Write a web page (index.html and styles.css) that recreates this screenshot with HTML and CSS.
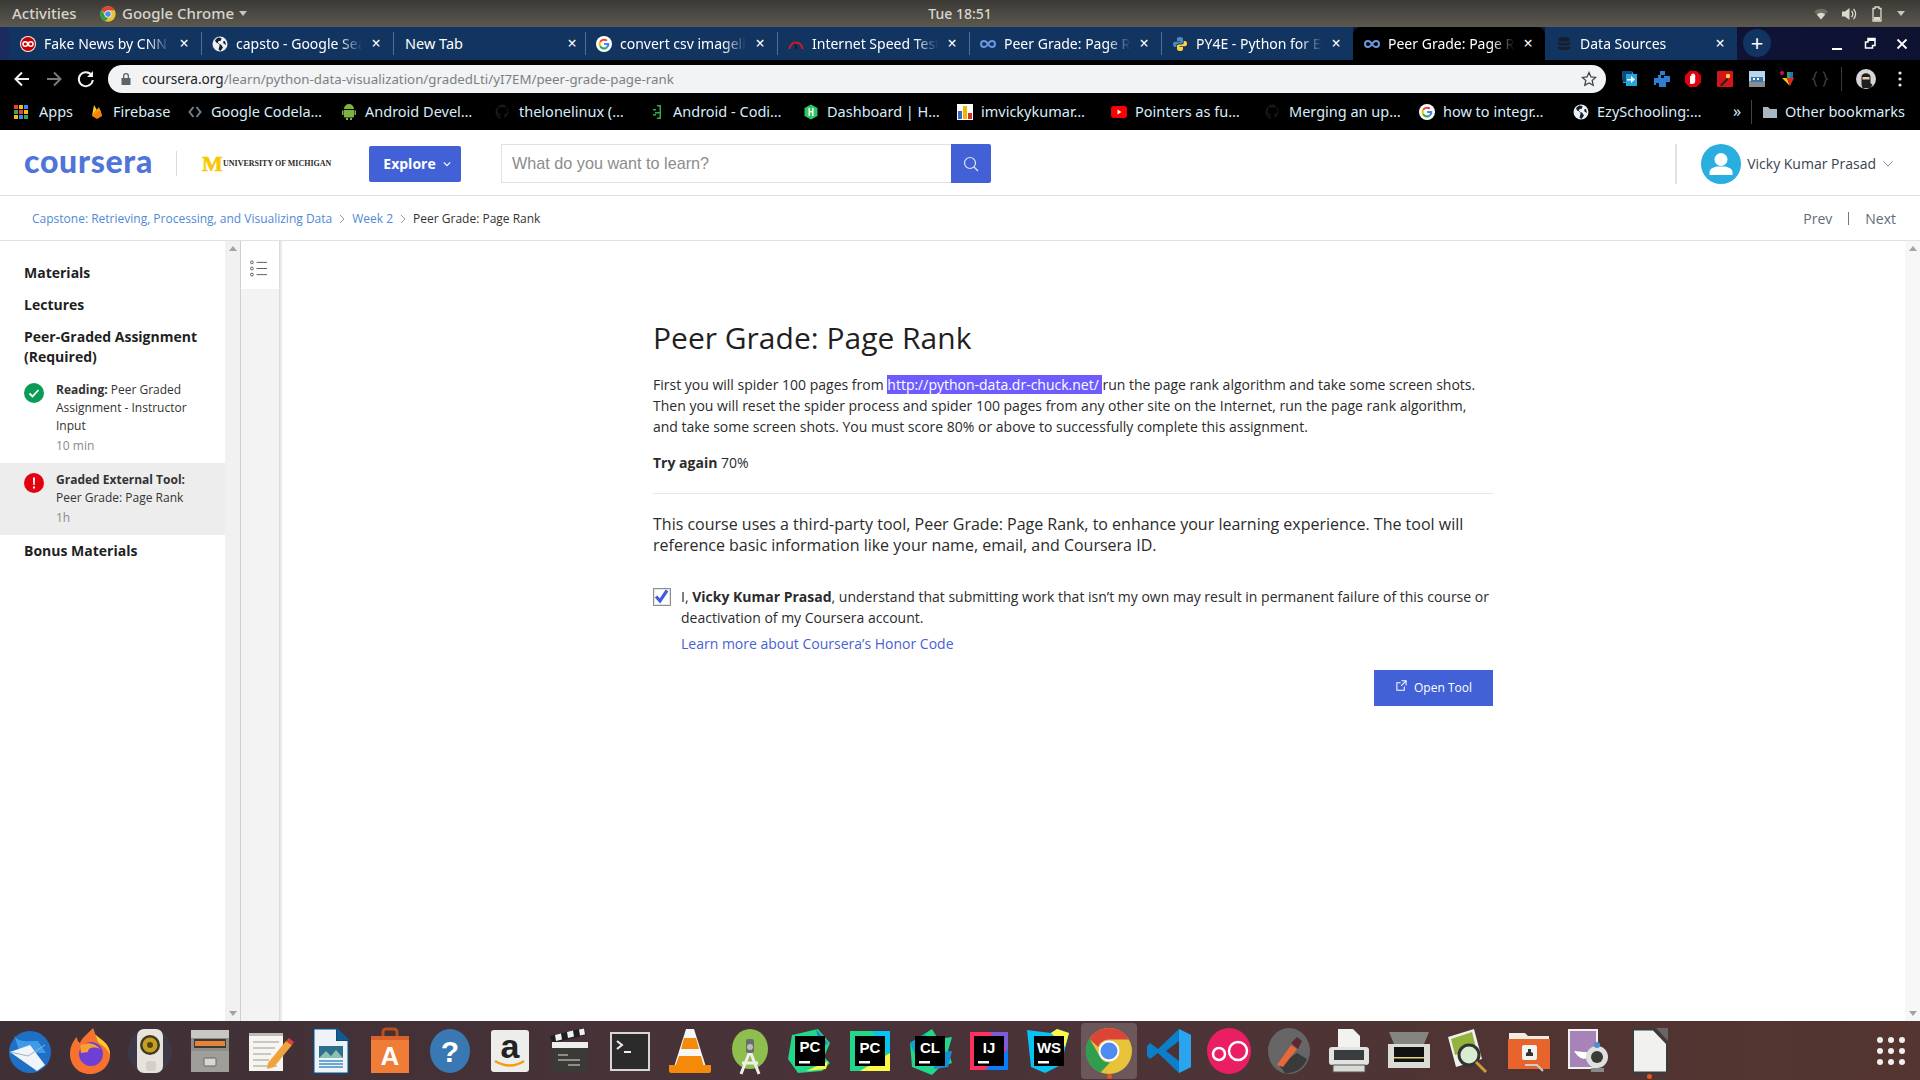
FILE: index.html
```html
<!DOCTYPE html>
<html lang="en">
<head>
<meta charset="utf-8">
<title>Peer Grade: Page Rank</title>
<link rel="stylesheet" href="styles.css">
</head>
<body>
<svg class="defs" xmlns="http://www.w3.org/2000/svg">
  <symbol id="chrome" viewBox="0 0 48 48">
    <circle cx="24" cy="24" r="23" fill="#e7c33a"/>
    <path d="M24 1a23 23 0 0 1 20 11.500H24a11.500 11.500 0 0 0-10.800 7.500L4.500 12A23 23 0 0 1 24 1z" fill="#db4437"/>
    <path d="M4.500 11.500 14 28a11.500 11.500 0 0 0 11 7.500L15.500 45.500A23 23 0 0 1 4.500 11.500z" fill="#2f9e4f"/>
    <circle cx="24" cy="24" r="10.500" fill="#fff"/><circle cx="24" cy="24" r="8.500" fill="#4f8bf0"/>
  </symbol>
  <symbol id="goog" viewBox="0 0 16 16">
    <circle cx="8" cy="8" r="8" fill="#fff"/>
    <path d="M8 2.700a5.300 5.300 0 0 1 3.600 1.400L10.200 5.500A3.300 3.300 0 0 0 5 6.500L3.300 5.200A5.300 5.300 0 0 1 8 2.700z" fill="#ea4335"/>
    <path d="M3.300 5.200 5 6.500a3.300 3.300 0 0 0 0 3L3.300 10.800a5.300 5.300 0 0 1 0-5.600z" fill="#fbbc05"/>
    <path d="M5 9.500a3.300 3.300 0 0 0 5 1.200l1.600 1.300A5.300 5.300 0 0 1 3.300 10.800z" fill="#34a853"/>
    <path d="M13.300 7H8v2.100h3a2.700 2.700 0 0 1-1 1.600l1.600 1.300A5.300 5.300 0 0 0 13.300 7z" fill="#4285f4"/>
  </symbol>
  <symbol id="globe" viewBox="0 0 16 16">
    <circle cx="8" cy="8" r="7.500" fill="#eef1f4"/>
    <path d="M6 1.500 3 4l1 2.500 3 1 .5 2.500-1 3.500L8.500 15 11 11.500l-2-3-3-.5V5.500l3-1 .5-2.500zM13 5l-2 .5.500 2 2.500 1.500z" fill="#16202c"/>
  </symbol>
  <symbol id="loop" viewBox="0 0 16 16">
    <path d="M8 8C6.500 5.500 5.500 5 4 5a3 3 0 0 0 0 6c1.500 0 2.500-.5 4-3s2.500-3 4-3a3 3 0 0 1 0 6c-1.500 0-2.500-.5-4-3z" fill="none" stroke="#6a96dc" stroke-width="2"/>
  </symbol>
  <symbol id="gh" viewBox="0 0 16 16">
    <path d="M8 .500a7.500 7.500 0 0 0-2.400 14.600v-2.500c-2 .4-2.500-1-2.500-1-.4-.8-.8-1-.8-1-.7-.5 0-.5 0-.5.700 0 1.100.8 1.100.8.600 1.100 1.700.8 2.100.6 0-.5.300-.8.500-1-1.700-.2-3.400-.8-3.400-3.700 0-.8.300-1.500.8-2-.1-.2-.3-1 .1-2 0 0 .6-.2 2.100.8a7 7 0 0 1 3.800 0c1.500-1 2.100-.8 2.100-.8.400 1 .2 1.800.1 2 .5.500.8 1.200.8 2 0 2.900-1.700 3.500-3.400 3.700.3.200.5.700.5 1.400v2.200A7.500 7.500 0 0 0 8 .500z" fill="#1a1a1a"/>
  </symbol>
  <symbol id="jb" viewBox="0 0 48 48"><rect x="9" y="9" width="30" height="30" fill="#000"/><path d="M13 34h11v2.500H13z" fill="#fff"/></symbol>
</svg>

<header class="os-bar">
  <div class="os-left">
    <span class="os-item">Activities</span>
    <span class="os-app"><svg class="fav"><use href="#chrome"/></svg>Google Chrome<i class="os-caret"></i></span>
  </div>
  <div class="os-clock">Tue 18:51</div>
  <div class="os-right">
    <svg class="os-ico" viewBox="0 0 16 16"><path d="M8 13.500 1 5.500a10 10 0 0 1 14 0z" fill="#6f6c64"/><path d="M8 13.500 3.800 8.500a6 6 0 0 1 8.400 0z" fill="#ded9d0"/></svg>
    <svg class="os-ico" viewBox="0 0 16 16"><path d="M1 5.500h3L8.500 2v12L4 10.500H1z" fill="#ded9d0"/><path d="M10.500 5a4 4 0 0 1 0 6M12.500 3a7 7 0 0 1 0 10" fill="none" stroke="#ded9d0" stroke-width="1.300"/></svg>
    <svg class="os-ico" viewBox="0 0 16 16"><path d="M6 1h4v1.500h2V15H4V2.500h2z" fill="none" stroke="#ded9d0" stroke-width="1.300"/><rect x="5" y="11" width="6" height="3.500" fill="#ded9d0"/></svg>
    <i class="os-caret os-caret-r"></i>
  </div>
</header>

<nav class="tabstrip">
  <div class="tab">
    <svg class="fav" viewBox="0 0 16 16"><circle cx="8" cy="8" r="8" fill="#f4f4f4"/><circle cx="8" cy="8" r="7" fill="#cc0000"/><circle cx="5.300" cy="8" r="2.300" fill="none" stroke="#fff" stroke-width="1.500"/><circle cx="10.700" cy="8" r="2.300" fill="none" stroke="#fff" stroke-width="1.500"/></svg>
    <span class="tab-title">Fake News by CNN Anchors</span><span class="tab-x">×</span>
  </div>
  <div class="tab sep"><svg class="fav"><use href="#globe"/></svg><span class="tab-title">capsto - Google Search</span><span class="tab-x">×</span></div>
  <div class="tab sep tab-plain"><span class="tab-title">New Tab</span><span class="tab-x">×</span></div>
  <div class="tab sep"><svg class="fav"><use href="#goog"/></svg><span class="tab-title">convert csv imagelink</span><span class="tab-x">×</span></div>
  <div class="tab sep">
    <svg class="fav" viewBox="0 0 16 16"><path d="M1.500 13a6.500 6.500 0 0 1 13 0" fill="none" stroke="#c61c24" stroke-width="2.200"/><path d="M8 13 6 7l3.500 5z" fill="#111"/></svg>
    <span class="tab-title">Internet Speed Test</span><span class="tab-x">×</span>
  </div>
  <div class="tab sep"><svg class="fav"><use href="#loop"/></svg><span class="tab-title">Peer Grade: Page Rank</span><span class="tab-x">×</span></div>
  <div class="tab sep">
    <svg class="fav" viewBox="0 0 16 16"><path d="M8 1C5 1 5 2 5 3.500V5h3.500v.8H3C1.500 5.800 1 7 1 8.500S1.800 11 3 11h1.300V9.500c0-1.200 1-2 2.200-2h3c1 0 1.500-.8 1.500-1.700V3C11 1.800 9.800 1 8 1z" fill="#4b8bbe"/><path d="M8 15c3 0 3-1 3-2.500V11H7.500v-.8H13c1.500 0 2-1.200 2-2.700S14.200 5 13 5h-1.300v1.500c0 1.200-1 2-2.200 2h-3c-1 0-1.500.8-1.500 1.700V13c0 1.200 1.200 2 3 2z" fill="#ffd43b"/></svg>
    <span class="tab-title">PY4E - Python for Everybody</span><span class="tab-x">×</span>
  </div>
  <div class="tab active"><svg class="fav"><use href="#loop"/></svg><span class="tab-title">Peer Grade: Page Rank</span><span class="tab-x">×</span></div>
  <div class="tab">
    <svg class="fav" viewBox="0 0 16 16"><g fill="#16202c"><ellipse cx="8" cy="3.500" rx="6" ry="2.500"/><path d="M2 5.500c1 2 11 2 12 0V8c-1 2-11 2-12 0zM2 9.500c1 2 11 2 12 0V12c-1 3-11 3-12 0z"/></g></svg>
    <span class="tab-title">Data Sources</span><span class="tab-x">×</span>
  </div>
  <div class="tab-new">+</div>
  <div class="win-ctrls">
    <svg class="win-btn" viewBox="0 0 14 14"><path d="M2 11h10v2H2z" fill="#fff"/></svg>
    <svg class="win-btn" viewBox="0 0 14 14"><path d="M5 1.500h7v7H9.500V11H2.500V5H5z" fill="none" stroke="#fff" stroke-width="1.500"/><path d="M5 3h7" stroke="#fff" stroke-width="2"/></svg>
    <svg class="win-btn" viewBox="0 0 14 14"><path d="m2.500 2.500 9 9m0-9-9 9" stroke="#fff" stroke-width="1.800"/></svg>
  </div>
</nav>

<div class="toolbar">
  <svg class="nav-btn" viewBox="0 0 32 32"><path d="M23 16H10m6-6.500L9.500 16l6.500 6.500" fill="none" stroke="#f1f1f1" stroke-width="2"/></svg>
  <svg class="nav-btn" viewBox="0 0 32 32"><path d="M9 16h13m-6-6.500 6.500 6.500-6.500 6.500" fill="none" stroke="#7a7a7a" stroke-width="2"/></svg>
  <svg class="nav-btn" viewBox="0 0 32 32"><path d="M21.500 12a7 7 0 1 0 1.300 5" fill="none" stroke="#f1f1f1" stroke-width="2"/><path d="M23 8v6h-6z" fill="#f1f1f1"/></svg>
  <div class="urlbar">
    <svg class="lock" viewBox="0 0 12 14"><path d="M3 6V4a3 3 0 0 1 6 0v2h1.500v7h-9V6zm1.300 0h3.400V4a1.700 1.700 0 0 0-3.400 0z" fill="#5f6368"/></svg>
    <span class="url"><span class="url-host">coursera.org</span>/learn/python-data-visualization/gradedLti/yI7EM/peer-grade-page-rank</span>
    <svg class="star" viewBox="0 0 16 16"><path d="m8 1.500 2 4.400 4.700.5-3.500 3.200 1 4.700L8 11.900 3.800 14.300l1-4.700L1.300 6.400 6 5.900z" fill="none" stroke="#444" stroke-width="1.300"/></svg>
  </div>
  <div class="ext-row">
    <svg class="ext" viewBox="0 0 18 18"><path d="M1 1h10l1.500 3H16v12H5V13H2z" fill="#25a7e0"/><path d="M1 1h10v3H5v8H2z" fill="#0b4a7a"/><path d="M6 9h4V6l4 3.500-4 3.500v-2.500H6z" fill="#fff"/></svg>
    <svg class="ext" viewBox="0 0 18 18"><path d="M7 1h5v4H8v3h3V6h6v6h-4v5H6v-4H3v2H1V8h4V5h2z" fill="#2d7fd4"/></svg>
    <svg class="ext" viewBox="0 0 18 18"><path d="M5.500 1h7L17 5.500v7L12.500 17h-7L1 12.500v-7z" fill="#e3000f"/><path d="M6 13V6.500c0-1 1.300-1 1.300 0V8V4.500c0-1 1.300-1 1.300 0V8V4c0-1 1.300-1 1.300 0v4V5c0-1 1.300-1 1.300 0v6c0 2-1 3-3 3S6 14 6 13z" fill="#fff"/></svg>
    <svg class="ext" viewBox="0 0 18 18"><rect x="1" y="1" width="16" height="16" rx="1" fill="#d8141b"/><path d="m4 15 7-7 1.500 1.500-7 7z" fill="#222"/><circle cx="12" cy="6" r="2.200" fill="#ffd84a"/></svg>
    <svg class="ext" viewBox="0 0 18 18"><rect x="1" y="1" width="16" height="16" fill="#b9d8ee"/><rect x="1" y="11" width="16" height="6" fill="#8a8d90"/><rect x="3" y="7" width="12" height="5" fill="#4177a6"/><rect x="5" y="8" width="2" height="2" fill="#fff"/><rect x="9" y="8" width="2" height="2" fill="#fff"/></svg>
    <svg class="ext" viewBox="0 0 18 18"><circle cx="3" cy="3" r="2" fill="#e6007e"/><path d="M8 2h3v6H8z" fill="#2da44e"/><path d="M11 2h3v6h-3z" fill="#2b6cd4"/><path d="M3 8h5l3 8z" fill="#f6c10e"/><path d="M8 8h7l-4 8z" fill="#e3271e"/></svg>
    <svg class="ext" viewBox="0 0 18 18"><path d="M6 2C3 2 5 8 2 9c3 1 1 7 4 7M12 2c3 0 1 6 4 7-3 1-1 7-4 7" fill="none" stroke="#3a3a3a" stroke-width="1.500"/></svg>
    <span class="ext-sep"></span>
    <svg class="ext-avatar" viewBox="0 0 20 20"><circle cx="10" cy="10" r="10" fill="#d6d6d6"/><path d="M5.500 8c0-5 9-5 9 0v6l2 2-2 3H6.500l-1-3z" fill="#1e1e1e"/><rect x="6.500" y="8" width="7" height="2.500" fill="#e8c9a8"/></svg>
    <svg class="ext-dots" viewBox="0 0 4 16"><circle cx="2" cy="2" r="1.600" fill="#e8e8e8"/><circle cx="2" cy="8" r="1.600" fill="#e8e8e8"/><circle cx="2" cy="14" r="1.600" fill="#e8e8e8"/></svg>
  </div>
</div>

<div class="bookmarks">
  <div class="bm bm-apps">
    <svg class="fav" viewBox="0 0 16 16"><g fill="#ea4335"><rect x="1" y="1" width="4" height="4"/><rect x="6" y="1" width="4" height="4" fill="#fbbc05"/><rect x="11" y="1" width="4" height="4" fill="#4285f4"/><rect x="1" y="6" width="4" height="4" fill="#34a853"/><rect x="6" y="6" width="4" height="4"/><rect x="11" y="6" width="4" height="4" fill="#fbbc05"/><rect x="1" y="11" width="4" height="4" fill="#fbbc05"/><rect x="6" y="11" width="4" height="4" fill="#4285f4"/><rect x="11" y="11" width="4" height="4" fill="#34a853"/></g></svg>Apps
  </div>
  <div class="bm bm-fire">
    <svg class="fav" viewBox="0 0 16 16"><path d="M3 12 5 1l3 5-1 1z" fill="#ffca28"/><path d="M3 12 10 3l3 9z" fill="#ffa000"/><path d="m3 12 5 3 5-3-1.500-6z" fill="#f6820c"/></svg>Firebase
  </div>
  <div class="bm"><svg class="fav" viewBox="0 0 16 16"><path d="M6.500 3 2.500 8l4 5M9.500 3l4 5-4 5" fill="none" stroke="#6f8090" stroke-width="2"/></svg>Google Codela…</div>
  <div class="bm"><svg class="fav" viewBox="0 0 16 16"><path d="M3 6h10v6.500a1 1 0 0 1-1 1H4a1 1 0 0 1-1-1zM3 5a5 5 0 0 1 10 0zM1 6.500h1.500V11H1zM13.500 6.500H15V11h-1.500zM5 14h2v2H5zM9 14h2v2H9z" fill="#7cb342"/></svg>Android Devel…</div>
  <div class="bm"><svg class="fav"><use href="#gh"/></svg>thelonelinux (…</div>
  <div class="bm"><svg class="fav" viewBox="0 0 16 16"><path d="M8 1h4v14H8v-1.500h2.500v-4H6V8h4.500V2.500H8zM4 5h3v1.500H4zM4 10h3v1.500H4z" fill="#2cb14a"/></svg>Android - Codi…</div>
  <div class="bm"><svg class="fav" viewBox="0 0 16 16"><path d="M8 .500 14.500 4v8L8 15.500 1.500 12V4z" fill="#2bc864"/><path d="M5.500 4h1.500v3h2V4h1.500v8H9V8.500H7V12H5.500z" fill="#fff"/></svg>Dashboard | H…</div>
  <div class="bm"><svg class="fav" viewBox="0 0 16 16"><rect width="16" height="16" fill="#fff"/><rect x="1" y="7" width="4" height="8" fill="#3768c8"/><rect x="6" y="2" width="4" height="13" fill="#f5b400"/><rect x="11" y="9" width="4" height="6" fill="#d93025"/></svg>imvickykumar…</div>
  <div class="bm"><svg class="fav" viewBox="0 0 16 16"><rect y="2" width="16" height="12" rx="3" fill="#f00"/><path d="m6.500 5.500 4 2.500-4 2.500z" fill="#fff"/></svg>Pointers as fu…</div>
  <div class="bm"><svg class="fav"><use href="#gh"/></svg>Merging an up…</div>
  <div class="bm"><svg class="fav"><use href="#goog"/></svg>how to integr…</div>
  <div class="bm"><svg class="fav"><use href="#globe"/></svg>EzySchooling:…</div>
  <div class="bm-end">
    <span class="bm-more">»</span><span class="bm-sep"></span>
    <svg class="fav" viewBox="0 0 16 16"><path d="M1 3h5l2 2h7v9H1z" fill="#a9b8c2"/></svg><span class="bm-other">Other bookmarks</span>
  </div>
</div>

<header class="site-head">
  <span class="wordmark">coursera</span>
  <span class="head-sep"></span>
  <div class="partner"><span class="partner-m">M</span><span class="partner-name">UNIVERSITY OF MICHIGAN</span></div>
  <button class="explore">Explore<svg class="explore-chev" viewBox="0 0 10 6"><path d="m1 1 4 4 4-4" fill="none" stroke="#fff" stroke-width="1.500"/></svg></button>
  <div class="search">
    <span class="search-input">What do you want to learn?</span>
    <span class="search-btn"><svg viewBox="0 0 16 16"><circle cx="7" cy="7" r="5.500" fill="none" stroke="#dfe5f7" stroke-width="1.200"/><path d="m11 11 4 4" stroke="#dfe5f7" stroke-width="1.200"/></svg></span>
  </div>
  <div class="user">
    <span class="user-sep"></span>
    <svg class="user-pic" viewBox="0 0 40 40"><circle cx="20" cy="20" r="20" fill="#2aaee0"/><circle cx="20" cy="15.500" r="6.500" fill="#fff"/><path d="M8.500 31v-3c0-3 4-5 7.500-5.500h8c3.500.5 7.500 2.500 7.500 5.500v3z" fill="#fff"/></svg>
    <span class="user-name">Vicky Kumar Prasad</span>
    <svg class="user-chev" viewBox="0 0 10 6"><path d="m.5.500 4.500 4.500L9.500.500" fill="none" stroke="#8a8a8a"/></svg>
  </div>
</header>

<div class="crumbs">
  <a class="crumb-link">Capstone: Retrieving, Processing, and Visualizing Data</a>
  <svg class="crumb-chev" viewBox="0 0 6 10"><path d="m1 1 4 4-4 4" fill="none" stroke="#9a9a9a"/></svg>
  <a class="crumb-link">Week 2</a>
  <svg class="crumb-chev" viewBox="0 0 6 10"><path d="m1 1 4 4-4 4" fill="none" stroke="#9a9a9a"/></svg>
  <span class="crumb-now">Peer Grade: Page Rank</span>
  <div class="pager"><span>Prev</span><i class="pager-sep"></i><span>Next</span></div>
</div>

<div class="workspace">
  <aside class="sidebar">
    <h3 class="side-head">Materials</h3>
    <h3 class="side-head">Lectures</h3>
    <h3 class="side-head">Peer-Graded Assignment (Required)</h3>
    <div class="side-item">
      <svg class="status" viewBox="0 0 20 20"><circle cx="10" cy="10" r="10" fill="#0a9b57"/><path d="m5.500 10.500 3 3 6-6.500" fill="none" stroke="#fff" stroke-width="1.800"/></svg>
      <div class="side-text"><p><b>Reading:</b> Peer Graded Assignment - Instructor Input</p><p class="side-time">10 min</p></div>
    </div>
    <div class="side-item current">
      <svg class="status" viewBox="0 0 20 20"><circle cx="10" cy="10" r="10" fill="#e3000f"/><path d="M9 4.500h2L10.700 12H9.300zM9 13.500h2v2H9z" fill="#fff"/></svg>
      <div class="side-text"><p><b>Graded External Tool:</b> Peer Grade: Page Rank</p><p class="side-time">1h</p></div>
    </div>
    <h3 class="side-head side-bonus">Bonus Materials</h3>
  </aside>
  <div class="scrollbar">
    <i class="arrow-up"></i><i class="arrow-down"></i>
  </div>
  <div class="rail">
    <div class="rail-btn"><svg viewBox="0 0 18 18"><g fill="none" stroke="#555"><circle cx="2" cy="2.500" r="1.500"/><circle cx="2" cy="9" r="1.500"/><circle cx="2" cy="15.500" r="1.500"/><path d="M7 2.500h11M7 9h11M7 15.500h11"/></g></svg></div>
  </div>
  <main class="main">
    <h1 class="title">Peer Grade: Page Rank</h1>
    <p class="para">First you will spider 100 pages from <span class="hl">http://python-data.dr-chuck.net/ </span>run the page rank algorithm and take some screen shots. Then you will reset the spider process and spider 100 pages from any other site on the Internet, run the page rank algorithm, and take some screen shots. You must score 80% or above to successfully complete this assignment.</p>
    <p class="para try"><b>Try again</b> 70%</p>
    <hr class="rule">
    <p class="lead">This course uses a third-party tool, Peer Grade: Page Rank, to enhance your learning experience. The tool will reference basic information like your name, email, and Coursera ID.</p>
    <div class="honor">
      <span class="check"><svg viewBox="0 0 16 16"><path d="m2 7.500 4 4.500L13 1.500" fill="none" stroke="#3f5fd8" stroke-width="3.200"/></svg></span>
      <div class="honor-text">
        <p>I, <b>Vicky Kumar Prasad</b>, understand that submitting work that isn’t my own may result in permanent failure of this course or deactivation of my Coursera account.</p>
        <a class="honor-link">Learn more about Coursera’s Honor Code</a>
      </div>
    </div>
    <div class="actions">
      <button class="open-tool"><svg viewBox="0 0 14 14"><path d="M10 8v4H2V4h4" fill="none" stroke="#fff" stroke-width="1.100"/><path d="M7 2h5v5M12 2 6.500 7.500" fill="none" stroke="#fff" stroke-width="1.100"/></svg>Open Tool</button>
    </div>
  </main>
  <div class="scrollbar scrollbar-r"><i class="arrow-up"></i><i class="arrow-down"></i></div>
</div>

<footer class="dock">
  <div class="dock-item"><svg viewBox="0 0 48 48"><circle cx="24" cy="25" r="21" fill="#1f6fc4"/><path d="M8 8c4 8 14 6 24 6l8 12H14z" fill="#3d9bea"/><path d="m4 25 20-7 15 20-8 6z" fill="#f1f4f8"/><path d="m4 25 18 4 17-11" fill="none" stroke="#9fb0c4"/></svg></div>
  <div class="dock-item"><svg viewBox="0 0 48 48"><path d="M24 47C11 47 4 37 4 27 4 20 7 14 11 10c0 3 1 5 3 6 2-6 9-10 13-15 0 6 4 8 9 12 6 5 8 9 8 15 0 11-9 19-20 19z" fill="#f8722f"/><path d="M27 1c0 6 4 8 9 12 6 5 8 9 8 15-3-8-8-9-12-13z" fill="#ffc62e"/><circle cx="25" cy="27" r="12" fill="#6d3fd4"/><path d="M14 19c6-5 16-3 20 3-7-3-12-1-12 3l-7 1z" fill="#f8a02f"/></svg></div>
  <div class="dock-item"><svg viewBox="0 0 48 48"><ellipse cx="24" cy="24" rx="22" ry="23" fill="#3a3f52" opacity=".6"/><rect x="11" y="2" width="26" height="44" rx="7" fill="#e6e4dd"/><circle cx="24" cy="18" r="10" fill="#3f3a25"/><circle cx="24" cy="18" r="7.500" fill="#c5a020"/><circle cx="24" cy="18" r="3" fill="#524518"/><rect x="20" y="34" width="10" height="10" rx="3" fill="#d2d0c9"/></svg></div>
  <div class="dock-item"><svg viewBox="0 0 48 48"><rect x="5" y="3" width="38" height="42" rx="2" fill="#8e8d88"/><rect x="5" y="3" width="38" height="8" fill="#c8c7c2"/><rect x="8" y="12" width="32" height="9" fill="#3a3a38"/><rect x="9" y="14" width="30" height="5" fill="#e8833a"/><rect x="5" y="24" width="38" height="21" fill="#9f9e99"/><rect x="18" y="31" width="12" height="8" rx="1" fill="#d8d7d2" stroke="#666"/></svg></div>
  <div class="dock-item"><svg viewBox="0 0 48 48"><rect x="3" y="6" width="34" height="38" fill="#f6f5ef"/><path d="M3 6h34v3H3z" fill="#bdbcb6"/><path d="M7 15h26M7 21h22M7 27h18M7 33h16M7 39h24" stroke="#9a9a94"/><path d="m22 36 18-22 6 4-18 22-7 2z" fill="#f0a23c"/><path d="m40 14 3-3 5 4-2 3z" fill="#d9433c"/></svg></div>
  <div class="dock-item"><svg viewBox="0 0 48 48"><path d="M7 1h24l12 12v34H7z" fill="#0e4a78"/><path d="M8.500 2.500H30V14h11.500v31.500h-33z" fill="#eef3f7"/><path d="M31 1 43 13H31z" fill="#0f5c92"/><rect x="13" y="19" width="24" height="12" fill="#2c6f8e"/><path d="m13 31 7-7 5 5 5-6 7 8z" fill="#8ec0b0"/><path d="M13 34h24M13 37h24M13 40h24" stroke="#3f8fc6" stroke-width="1.500"/></svg></div>
  <div class="dock-item"><svg viewBox="0 0 48 48"><path d="M17 10V5a3 3 0 0 1 3-3h8a3 3 0 0 1 3 3v5" fill="none" stroke="#b94f1d" stroke-width="3"/><path d="M5 9h38v37H5z" fill="#ef7c37"/><path d="M5 9h38v4H5z" fill="#d9622a"/><text class="icon-a" x="24" y="38" text-anchor="middle">A</text></svg></div>
  <div class="dock-item"><svg viewBox="0 0 48 48"><ellipse cx="24" cy="24" rx="20" ry="22" fill="#3a78b4"/><text class="icon-q" x="24" y="35" text-anchor="middle">?</text></svg></div>
  <div class="dock-item"><svg viewBox="0 0 48 48"><rect x="5" y="3" width="38" height="42" rx="3" fill="#ededeb"/><text class="icon-amz" x="24" y="31" text-anchor="middle">a</text><path d="M9 34c10 6 20 6 29 0" fill="none" stroke="#f39c12" stroke-width="2.500"/></svg></div>
  <div class="dock-item"><svg viewBox="0 0 48 48"><rect x="6" y="19" width="36" height="26" fill="#3b3a37"/><path d="m4 9 34-8 2 7-34 8z" fill="#1f1f1f"/><path d="m9 8 6-1.500 1 6-6 1.500zM21 5l6-1.500 1 6-6 1.500zM33 2.500l5-1 1 6-5 1z" fill="#f1f1f1"/><rect x="6" y="15" width="36" height="6" fill="#eee"/><path d="M12 28h10M12 33h22M22 38h12" stroke="#a9a9a5" stroke-width="1.500"/></svg></div>
  <div class="dock-item"><svg viewBox="0 0 48 48"><rect x="4" y="5" width="40" height="39" fill="#d7d6d2"/><rect x="6" y="7" width="36" height="35" fill="#2b2b2b"/><path d="m11 14 5 4-5 4" fill="none" stroke="#eee" stroke-width="2"/><path d="M18 25h7" stroke="#eee" stroke-width="2"/></svg></div>
  <div class="dock-item"><svg viewBox="0 0 48 48"><path d="M20 2h8l12 38H8z" fill="#f7f7f5"/><path d="M18 11h12l3 11H15zM13 29h22l3 11H9z" fill="#f58a0a"/><path d="M3 38h42v6a2 2 0 0 1-2 2H5a2 2 0 0 1-2-2z" fill="#f58a0a"/></svg></div>
  <div class="dock-item"><svg viewBox="0 0 48 48"><ellipse cx="24" cy="22" rx="18" ry="20" fill="#8ebe4d"/><path d="m24 24-9 23M24 24l9 23M16 36h16" fill="none" stroke="#eee" stroke-width="3"/><rect x="20" y="12" width="8" height="14" rx="2" fill="#6d6d69"/><circle cx="24" cy="20" r="3" fill="#bbb"/></svg></div>
  <div class="dock-item"><svg viewBox="0 0 48 48"><path d="M6 8 32 2l12 14 -6 14 6 6-8 8-24 2L2 32z" fill="#21d789"/><path d="M30 2l12 14-8 6z" fill="#1e88c7"/><path d="M20 44l22-10-2 8z" fill="#fcf84a"/><use href="#jb"/><text class="icon-jb" x="24" y="25" text-anchor="middle">PC</text></svg></div>
  <div class="dock-item"><svg viewBox="0 0 48 48"><rect x="4" y="4" width="40" height="40" fill="#21d789"/><path d="M26 4h18v26z" fill="#07c3f2"/><path d="M14 44h30V26z" fill="#fcf84a"/><use href="#jb"/><text class="icon-jb" x="24" y="26" text-anchor="middle">PC</text></svg></div>
  <div class="dock-item"><svg viewBox="0 0 48 48"><path d="M4 16 26 2l6 10 14-2-4 14 4 12-12 4-8 8L6 40z" fill="#21d789"/><path d="M4 16 20 6l-8 28z" fill="#09a3d5"/><path d="m28 26 18-2-4 16-14 2z" fill="#1591d3"/><use href="#jb"/><text class="icon-jb" x="24" y="26" text-anchor="middle">CL</text></svg></div>
  <div class="dock-item"><svg viewBox="0 0 48 48"><rect x="5" y="5" width="38" height="38" fill="#fe315d"/><path d="M24 5h19v20z" fill="#7b5cd6"/><path d="M20 43h23V22z" fill="#087cfa"/><use href="#jb"/><text class="icon-jb" x="24" y="26" text-anchor="middle">IJ</text></svg></div>
  <div class="dock-item"><svg viewBox="0 0 48 48"><path d="M2 3 26 6l6-4 12 4-6 24-2 8-16 8-14-6z" fill="#07c3f2"/><path d="M26 6l6-4 12 4-4 14z" fill="#fcf84a"/><use href="#jb"/><text class="icon-jb" x="24" y="26" text-anchor="middle">WS</text></svg></div>
  <div class="dock-item running focused"><svg viewBox="0 0 48 48"><use href="#chrome"/></svg></div>
  <div class="dock-item"><svg viewBox="0 0 48 48"><path d="M34 2 46 8v32l-12 6-21-20-8 6-3-3V19l3-3 8 6z" fill="#0c7fc8"/><path d="M34 2 46 8v32l-12 6z" fill="#2aa4ec"/><path d="M34 14 21 24l13 10z" fill="#4a3237"/></svg></div>
  <div class="dock-item"><svg viewBox="0 0 48 48"><ellipse cx="24" cy="24" rx="22" ry="23" fill="#e91e63"/><circle cx="14" cy="27" r="6" fill="none" stroke="#fff" stroke-width="2.500"/><circle cx="33" cy="24" r="9" fill="none" stroke="#fff" stroke-width="2.500"/></svg></div>
  <div class="dock-item"><svg viewBox="0 0 48 48"><ellipse cx="24" cy="24" rx="21" ry="23" fill="#666"/><path d="M42 32a21 23 0 0 1-22 14L14 38l18-12z" fill="#3a3a3a"/><path d="m12 38 14-20 6 4-14 18z" fill="#e7683a"/><path d="m26 16 6-6 5 4-4 8z" fill="#5b2a2f"/></svg></div>
  <div class="dock-item"><svg viewBox="0 0 48 48"><path d="M13 2h15l7 7v20H13z" fill="#f2f2f0"/><rect x="4" y="20" width="40" height="18" rx="3" fill="#e3e3df"/><rect x="9" y="23" width="30" height="10" fill="#3a3d3e"/><rect x="8" y="38" width="32" height="7" fill="#d9d9d5" stroke="#555"/></svg></div>
  <div class="dock-item"><svg viewBox="0 0 48 48"><path d="M4 5h40l-5 12H9z" fill="#85857f"/><path d="M3 17h42v24H3z" fill="#dcdcd7"/><rect x="9" y="20" width="30" height="15" fill="#121212"/><rect x="9" y="30" width="30" height="1.500" fill="#e6d577"/></svg></div>
  <div class="dock-item"><svg viewBox="0 0 48 48"><path d="m3 10 26-8 8 30-26 8z" fill="#f0f0ec"/><path d="m6 12 21-7 4 16-21 7z" fill="#93b33c"/><circle cx="24" cy="28" r="10" fill="#d8ecd0" stroke="#333" stroke-width="3"/><path d="m31 35 10 10" stroke="#c89b3a" stroke-width="3"/></svg></div>
  <div class="dock-item"><svg viewBox="0 0 48 48"><path d="M4 6h16l3 3h21v6H4z" fill="#f1ece4"/><path d="M3 12h42v30H3z" fill="#e7642c"/><rect x="17" y="18" width="15" height="15" rx="2" fill="#f2f2f0"/><path d="M21 29h7v-3l-2-1v-3h-3v3l-2 1z" fill="#333"/><path d="M20 38h12l6 6" fill="none" stroke="#ccc" stroke-width="2"/></svg></div>
  <div class="dock-item"><svg viewBox="0 0 48 48"><rect x="3" y="2" width="30" height="40" fill="#f0f0ee"/><rect x="5" y="4" width="26" height="36" fill="#a683b8"/><path d="M9 24c6 10 14 10 20 2z" fill="#fff"/><circle cx="32" cy="30" r="11" fill="#e0e0de"/><circle cx="32" cy="30" r="6" fill="#3a3a38"/><circle cx="32" cy="18" r="3" fill="#4f8bd0"/><rect x="26" y="41" width="13" height="4" fill="#888"/></svg></div>
  <div class="dock-item running"><svg viewBox="0 0 48 48"><path d="M7 1h22l14 15v31H7z" fill="#3b3b3b"/><path d="M9 3.500h19L41 17v27.500H9z" fill="#f1f1f0"/><path d="M31 1h12v13z" fill="#666"/></svg></div>
  <div class="dock-grid"><i></i><i></i><i></i><i></i><i></i><i></i><i></i><i></i><i></i></div>
</footer>
</body>
</html>
```

FILE: styles.css
```css
* { box-sizing: border-box; }
html, body { margin: 0; padding: 0; }
body {
  width: 1920px; height: 1080px; overflow: hidden;
  display: flex; flex-direction: column;
  font-family: "Open Sans", "Noto Sans", sans-serif;
  color: #1f1f1f; background: #fff;
}
p, h1, h3 { margin: 0; }
svg { display: block; flex: none; }
.defs { display: none; }
.fav { width: 16px; height: 16px; }

/* OS bar */
.os-bar {
  height: 27px; flex: none; display: flex; align-items: center;
  background: linear-gradient(#3a3935, #5c5950);
  color: #d8d5cc; font: 500 15px/27px "Noto Sans", sans-serif;
}
.os-left { display: flex; align-items: center; padding-left: 12px; width: 885px; }
.os-item { width: 88px; }
.os-app { display: flex; align-items: center; gap: 6px; }
.os-caret { display: inline-block; width: 0; height: 0; border: 4.500px solid transparent; border-top: 5px solid #c8c5bc; border-bottom: 0; margin-left: -1px; }
.os-caret-r { margin-left: 0; }
.os-clock { width: 150px; text-align: center; font-size: 14px; }
.os-right { margin-left: auto; display: flex; align-items: center; gap: 12px; padding-right: 15px; }
.os-ico { width: 16px; height: 16px; }

/* tabs */
.tabstrip {
  height: 33px; flex: none; display: flex; padding-left: 9px; align-items: stretch;
  background: linear-gradient(90deg, #1a2b60, #151a4c 60%, #0d1230);
  color: #fff; font: 400 14px/33px "Noto Sans", sans-serif;
}
.tab {
  width: 192px; flex: none; display: flex; align-items: center;
  padding-left: 11px; background: #123460; position: relative;
}
.tab.sep::before { content: ""; width: 1px; height: 23px; background: #53708f; position: absolute; left: 0; top: 5px; }
.tab-plain { padding-left: 12px; }
.tab-title {
  margin-left: 8px; width: 129px; white-space: nowrap; overflow: hidden;
  -webkit-mask-image: linear-gradient(90deg, #000 80%, transparent 98%);
  mask-image: linear-gradient(90deg, #000 80%, transparent 98%);
}
.tab-plain .tab-title { margin-left: 0; width: 160px; font-size: 14.500px; -webkit-mask-image: none; mask-image: none; }
.tab-x { width: 14px; margin-left: 4px; text-align: center; font-size: 16px; }
.tab-plain .tab-x { margin-left: 0; }
.tab.active { background: #000; border-radius: 8px 8px 0 0; }
.tab:last-of-type { border-radius: 0 8px 0 0; }
.tab-new {
  width: 28px; height: 28px; margin: 2px 0 0 6px; border-radius: 50%; background: #123460;
  text-align: center; font-size: 22px; line-height: 26px;
}
.win-ctrls { margin-left: auto; display: flex; align-items: center; gap: 18.500px; padding-right: 11px; }
.win-btn { width: 14px; height: 14px; }

/* toolbar */
.toolbar {
  height: 35px; flex: none; display: flex; align-items: center;
  background: #000; padding: 3px 0 0 6px;
}
.nav-btn { width: 32px; height: 32px; }
.urlbar {
  width: 1498px; height: 28px; margin-left: 6px; border-radius: 14px; background: #f1f3f4;
  display: flex; align-items: center; padding: 0 9px 0 12px;
  font: 400 13.300px/28px "Noto Sans", sans-serif; color: #7c7f82;
}
.lock { width: 12px; height: 14px; margin-right: 10px; }
.url-host { color: #222; font-size: 13.600px; }
.url { flex: 1; white-space: nowrap; }
.star { width: 16px; height: 16px; }
.ext-row { display: flex; align-items: center; margin-left: 15px; }
.ext { width: 18px; height: 18px; margin-right: 13.700px; }
.ext-sep { width: 1px; height: 24px; background: #3a3a3a; margin: 0 14px 0 -2px; }
.ext-avatar { width: 20px; height: 20px; margin-right: 22px; }
.ext-dots { width: 4px; height: 16px; }

/* bookmarks */
.bookmarks {
  height: 35px; flex: none; display: flex; align-items: center; padding: 0 0 2px 13px;
  background: #000; color: #d9ecfb; font: 400 14.500px/33px "Noto Sans", sans-serif; white-space: nowrap;
}
.bm { width: 154px; flex: none; display: flex; align-items: center; gap: 8px; }
.bm-apps { width: 76px; gap: 10px; }
.bm-fire { width: 98px; }
.bm-end { margin-left: auto; display: flex; align-items: center; padding-right: 15px; }
.bm-more { width: 14px; font-size: 16px; text-align: center; margin-right: 7px; }
.bm-sep { width: 1px; height: 24px; background: #444; margin-right: 10px; }
.bm-other { margin-left: 7px; }

/* site header */
.site-head {
  height: 66px; flex: none; display: flex; align-items: center; padding: 2px 0 0 24px;
  border-bottom: 1px solid #e1e1e1; background: #fff;
}
.wordmark { width: 127px; font: 900 32px/34px "Lato", sans-serif; color: #4f75d9; letter-spacing: .7px; margin-top: -5px; }
.head-sep { width: 1px; height: 25px; background: #dcdcdc; margin: 0 25px; }
.partner { width: 167px; display: flex; align-items: center; gap: 1px; }
.partner-m { font: 700 22px/22px "Liberation Serif", serif; color: #f7c800; width: 20px; -webkit-text-stroke: .6px #f7c800; }
.partner-name { font: 700 8px/12px "Liberation Serif", serif; color: #2a2a2a; white-space: nowrap; }
.explore {
  width: 92px; height: 36px; border: 0; border-radius: 2px; background: #4261d6; color: #fff; padding: 0 0 0 4px;
  font: 700 14px "Open Sans", sans-serif; display: flex; align-items: center; justify-content: center; gap: 7px;
}
.explore-chev { width: 8px; height: 6px; }
.search { display: flex; margin-left: 40px; height: 39px; width: 490px; }
.search-input {
  width: 450px; border: 1px solid #e2e2e2; border-right: 0; padding-left: 10px;
  font: 400 16.200px/37px "Liberation Sans", sans-serif; color: #8c8c8c;
}
.search-btn { width: 40px; background: #4261d6; display: flex; align-items: center; justify-content: center; border-radius: 0 2px 2px 0; }
.search-btn svg { width: 16px; height: 16px; }
.user { margin-left: auto; display: flex; align-items: center; padding-right: 27px; }
.user-sep { width: 2px; height: 40px; background: #e1e1e1; margin-right: 24px; }
.user-pic { width: 40px; height: 40px; margin-right: 6px; }
.user-name { font: 400 14px/20px "Open Sans", sans-serif; color: #3b4250; }
.user-chev { width: 10px; height: 6px; margin-left: 7px; }

/* breadcrumb */
.crumbs {
  height: 45px; flex: none; display: flex; align-items: center; padding: 1px 24px 0 32px;
  border-bottom: 1px solid #e1e1e1; font-size: 12px; line-height: 18px;
}
.crumb-link { color: #5189d6; }
.crumb-now { color: #333; }
.crumb-chev { width: 6px; height: 10px; margin: 0 7px; }
.pager { margin-left: auto; display: flex; align-items: center; font-size: 14px; color: #636b77; }
.pager-sep { width: 1px; height: 13px; background: #777; margin: 0 16px; }

/* workspace */
.workspace { flex: 1; min-height: 0; display: flex; }
.sidebar { width: 225px; flex: none; padding-top: 22px; background: #fff; }
.side-head { font: 700 14px/20px "Open Sans", sans-serif; color: #1f1f1f; margin: 0 24px 12px; }
.side-item { display: flex; padding: 8px 0 8px 24px; margin-top: -6px; font-size: 12px; line-height: 18px; color: #333; }
.status { width: 20px; height: 20px; margin: 2px 12px 0 0; }
.side-text { width: 150px; }
.side-text b { font-weight: 700; color: #333; }
.side-time { margin-top: 2px; color: #8b8b8b; }
.side-item.current { background: #ededed; margin-top: 0; }
.side-bonus { margin-top: 6px; }
.scrollbar { width: 15px; flex: none; background: #f1f1f1; display: flex; flex-direction: column; justify-content: space-between; align-items: center; padding: 5px 0; }
.scrollbar-r { background: #f7f7f7; }
.arrow-up, .arrow-down { width: 0; height: 0; border: 4px solid transparent; }
.arrow-up { border-bottom: 5px solid #a3a3a3; border-top: 0; }
.arrow-down { border-top: 5px solid #a3a3a3; border-bottom: 0; }
.rail {
  width: 43px; flex: none; border-left: 1px solid #cfcfcf;
  background: linear-gradient(90deg, #f3f3f3 38px, #d6d6d6 38px, #ebebeb 40px, #fff 42px);
}
.rail-btn { width: 38px; height: 48px; background: #fff; display: flex; align-items: flex-start; justify-content: center; padding: 19px 3px 0 0; }
.rail-btn svg { width: 17px; height: 17px; }
.main { flex: 1; padding: 77px 412px 0 370px; min-width: 0; }
.title { font: 400 30px/40px "Open Sans", sans-serif; color: #1f1f1f; margin-bottom: 16px; }
.para { font-size: 14px; line-height: 21px; color: #2b2b2b; }
.hl { background: #6e5cff; color: #fff; }
.try { margin-top: 15px; }
.rule { border: 0; border-top: 1px solid #e8e8e8; margin: 20px 0; height: 1px; }
.lead { font-size: 16px; line-height: 21px; color: #2b2b2b; }
.honor { display: flex; margin-top: 30px; font-size: 14px; line-height: 21px; color: #2b2b2b; }
.check { width: 18px; height: 18px; border: 1px solid #8f8f8f; box-shadow: inset 0 0 0 1px #e4e4e4; flex: none; margin: 2px 10px 0 0; background: #fff; }
.check svg { width: 16px; height: 16px; }
.honor-text { flex: 1; }
.honor-link { display: block; margin-top: 5px; color: #4a5fd4; }
.actions { display: flex; justify-content: flex-end; margin-top: 16px; }
.open-tool {
  width: 119px; height: 36px; border: 0; padding: 0 0 2px; background: #4261d6; color: #fff;
  font: 400 12px "Open Sans", sans-serif; display: flex; align-items: center; justify-content: center; gap: 6px;
}
.open-tool svg { width: 13px; height: 13px; margin-top: -3px; }

/* dock */
.dock {
  height: 59px; flex: none; display: flex; align-items: center;
  background: linear-gradient(90deg, #3f3036, #4a3338 50%, #54352f);
}
.dock-item { width: 59.970px; height: 59px; flex: none; display: flex; align-items: center; justify-content: center; position: relative; }
.dock-item svg { width: 48px; height: 48px; position: relative; }
.dock-item.focused::before { content: ""; position: absolute; left: 2px; right: 2px; top: 2px; bottom: 1px; background: rgba(255,255,255,.18); border-radius: 4px; }
.dock-item.running::after { content: ""; position: absolute; left: 50%; bottom: 1px; width: 5px; height: 5px; margin-left: -2.500px; border-radius: 50%; background: #e95420; }
.dock-grid { margin-left: auto; margin-right: 15px; display: grid; grid-template-columns: repeat(3, 6px); gap: 5px; }
.dock-grid i { width: 6px; height: 6px; border-radius: 50%; background: #f1eeee; }
.icon-a { font: 700 26px "Liberation Sans", sans-serif; fill: #fff; }
.icon-q { font: 700 30px "Liberation Sans", sans-serif; fill: #fff; }
.icon-amz { font: 700 34px "Liberation Sans", sans-serif; fill: #222; }
.icon-jb { font: 700 15px "Liberation Sans", sans-serif; fill: #fff; }
```
